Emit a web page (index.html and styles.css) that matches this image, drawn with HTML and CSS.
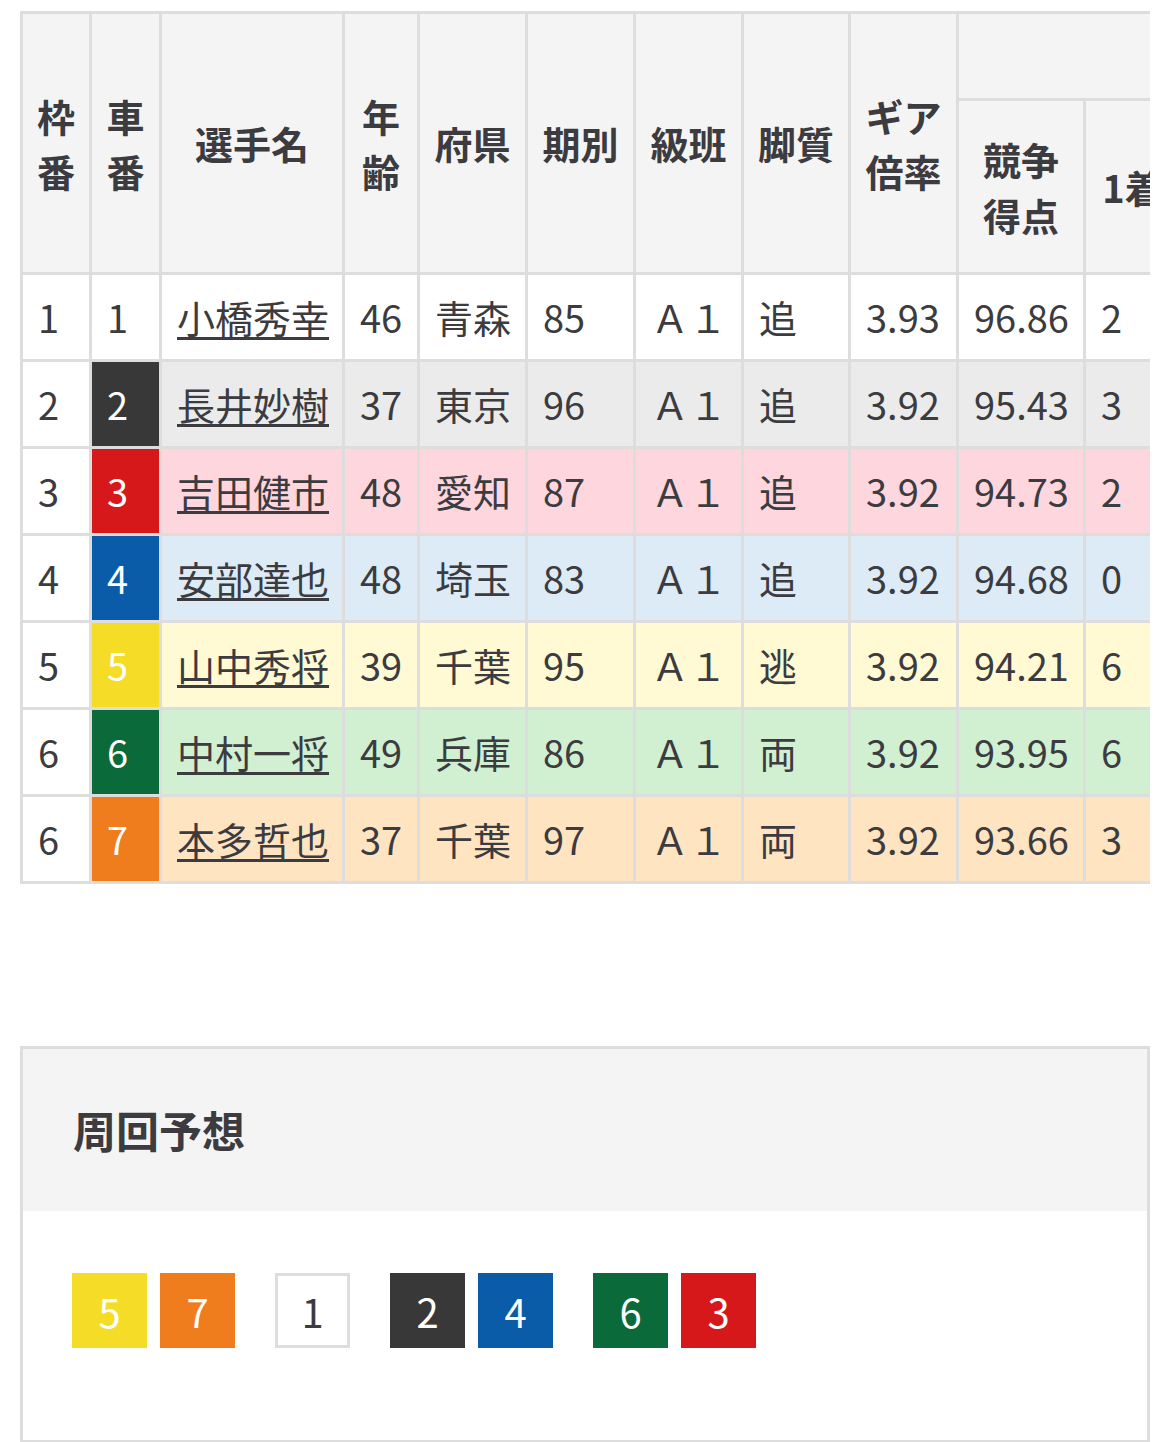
FILE: index.html
```html
<!DOCTYPE html>
<html lang="ja">
<head>
<meta charset="utf-8">
<title>出走表</title>
<link rel="stylesheet" href="styles.css">
</head>
<body>
<div class="page">
  <div class="table-wrap">
    <table class="entry">
      <colgroup>
        <col class="c-waku"><col class="c-sha"><col class="c-name"><col class="c-age"><col class="c-pref"><col class="c-ki"><col class="c-kyu"><col class="c-kyaku"><col class="c-gear"><col class="c-score"><col class="c-win"><col class="c-win"><col class="c-win">
      </colgroup>
      <thead>
        <tr class="h1">
          <th rowspan="2">枠<br>番</th>
          <th rowspan="2">車<br>番</th>
          <th rowspan="2">選手名</th>
          <th rowspan="2">年<br>齢</th>
          <th rowspan="2">府県</th>
          <th rowspan="2">期別</th>
          <th rowspan="2">級班</th>
          <th rowspan="2">脚質</th>
          <th rowspan="2">ギア<br>倍率</th>
          <th colspan="4" class="group"></th>
        </tr>
        <tr class="h2">
          <th>競争<br>得点</th>
          <th>1着</th>
          <th>2着</th>
          <th>3着</th>
        </tr>
      </thead>
      <tbody>
        <tr class="r1">
          <td class="waku">1</td><td class="sha s1">1</td><td><a href="#">小橋秀幸</a></td><td>46</td><td>青森</td><td>85</td><td>Ａ１</td><td>追</td><td>3.93</td><td>96.86</td><td>2</td><td>1</td><td>0</td>
        </tr>
        <tr class="r2">
          <td class="waku">2</td><td class="sha s2">2</td><td><a href="#">長井妙樹</a></td><td>37</td><td>東京</td><td>96</td><td>Ａ１</td><td>追</td><td>3.92</td><td>95.43</td><td>3</td><td>1</td><td>0</td>
        </tr>
        <tr class="r3">
          <td class="waku">3</td><td class="sha s3">3</td><td><a href="#">吉田健市</a></td><td>48</td><td>愛知</td><td>87</td><td>Ａ１</td><td>追</td><td>3.92</td><td>94.73</td><td>2</td><td>1</td><td>0</td>
        </tr>
        <tr class="r4">
          <td class="waku">4</td><td class="sha s4">4</td><td><a href="#">安部達也</a></td><td>48</td><td>埼玉</td><td>83</td><td>Ａ１</td><td>追</td><td>3.92</td><td>94.68</td><td>0</td><td>1</td><td>0</td>
        </tr>
        <tr class="r5">
          <td class="waku">5</td><td class="sha s5">5</td><td><a href="#">山中秀将</a></td><td>39</td><td>千葉</td><td>95</td><td>Ａ１</td><td>逃</td><td>3.92</td><td>94.21</td><td>6</td><td>1</td><td>0</td>
        </tr>
        <tr class="r6">
          <td class="waku">6</td><td class="sha s6">6</td><td><a href="#">中村一将</a></td><td>49</td><td>兵庫</td><td>86</td><td>Ａ１</td><td>両</td><td>3.92</td><td>93.95</td><td>6</td><td>1</td><td>0</td>
        </tr>
        <tr class="r7">
          <td class="waku">6</td><td class="sha s7">7</td><td><a href="#">本多哲也</a></td><td>37</td><td>千葉</td><td>97</td><td>Ａ１</td><td>両</td><td>3.92</td><td>93.66</td><td>3</td><td>1</td><td>0</td>
        </tr>
      </tbody>
    </table>
  </div>

  <section class="lap">
    <h2 class="lap-title">周回予想</h2>
    <div class="lap-body">
      <div class="line">
        <span class="badge s5">5</span><span class="badge s7">7</span>
      </div>
      <div class="line">
        <span class="badge s1">1</span>
      </div>
      <div class="line">
        <span class="badge s2">2</span><span class="badge s4">4</span>
      </div>
      <div class="line">
        <span class="badge s6">6</span><span class="badge s3">3</span>
      </div>
    </div>
  </section>
</div>
</body>
</html>
```

FILE: styles.css
```css
html, body {
  margin: 0;
  padding: 0;
  background: #ffffff;
}

body {
  font-family: "Noto Sans CJK JP", "Noto Sans", sans-serif;
  color: #3b3b40;
  font-size: 38px;
  line-height: 1.45;
}

.page {
  padding: 11px 20px 0 20px;
}

.table-wrap {
  width: 1130px;
  overflow: hidden;
}

.entry {
  border-collapse: separate;
  border-spacing: 0;
  table-layout: fixed;
  width: 1354px;
  border-left: 3px solid #dddddd;
  border-top: 3px solid #dddddd;
}

.c-waku { width: 69px; }
.c-sha { width: 70px; }
.c-name { width: 183px; }
.c-age { width: 75px; }
.c-pref { width: 108px; }
.c-ki { width: 108px; }
.c-kyu { width: 108px; }
.c-kyaku { width: 107px; }
.c-gear { width: 108px; }
.c-score { width: 127px; }
.c-win { width: 96px; }

.entry th,
.entry td {
  box-sizing: border-box;
  border-right: 3px solid #dddddd;
  border-bottom: 3px solid #dddddd;
  white-space: nowrap;
  overflow: hidden;
}

.entry th {
  background: #f4f4f4;
  font-weight: 700;
  text-align: center;
  vertical-align: middle;
  padding: 0;
}

.entry .h1 th { height: 87px; }
.entry .h2 th { height: 174px; }

.entry td {
  height: 87px;
  padding: 0 15px;
  text-align: left;
  vertical-align: middle;
}

.entry td a {
  color: #3b3b40;
  text-decoration: underline;
  text-decoration-thickness: 3px;
  text-underline-offset: 4px;
}

.entry td.waku { background: #ffffff; }

.r1 td { background: #ffffff; }
.r2 td { background: #ebebeb; }
.r3 td { background: #fdd6de; }
.r4 td { background: #ddebf7; }
.r5 td { background: #fffad3; }
.r6 td { background: #d1efd1; }
.r7 td { background: #ffe4c2; }

.s1 { background: #ffffff; color: #3b3b40; }
.s2 { background: #383838; color: #ffffff; }
.s3 { background: #d7181b; color: #ffffff; }
.s4 { background: #0b5ca8; color: #ffffff; }
.s5 { background: #f5dc27; color: #ffffff; }
.s6 { background: #0a6a3a; color: #ffffff; }
.s7 { background: #ef7d1d; color: #ffffff; }

.entry td.sha.s1 { background: #ffffff; color: #3b3b40; }
.entry td.sha.s2 { background: #383838; color: #ffffff; }
.entry td.sha.s3 { background: #d7181b; color: #ffffff; }
.entry td.sha.s4 { background: #0b5ca8; color: #ffffff; }
.entry td.sha.s5 { background: #f5dc27; color: #ffffff; }
.entry td.sha.s6 { background: #0a6a3a; color: #ffffff; }
.entry td.sha.s7 { background: #ef7d1d; color: #ffffff; }

.lap {
  margin-top: 162px;
  width: 1130px;
  box-sizing: border-box;
  border: 3px solid #dddddd;
}

.lap-title {
  margin: 0;
  height: 162px;
  display: flex;
  align-items: center;
  padding: 0 50px;
  background: #f4f4f4;
  font-size: 43px;
  font-weight: 700;
  line-height: 1.2;
}

.lap-body {
  display: flex;
  align-items: center;
  gap: 40px;
  padding: 62px 49px 92px;
}

.line {
  display: flex;
  gap: 13px;
}

.badge {
  box-sizing: border-box;
  width: 75px;
  height: 75px;
  display: flex;
  align-items: center;
  justify-content: center;
  font-size: 40px;
  line-height: 1;
}

.badge.s1 {
  border: 3px solid #dddddd;
}
```
